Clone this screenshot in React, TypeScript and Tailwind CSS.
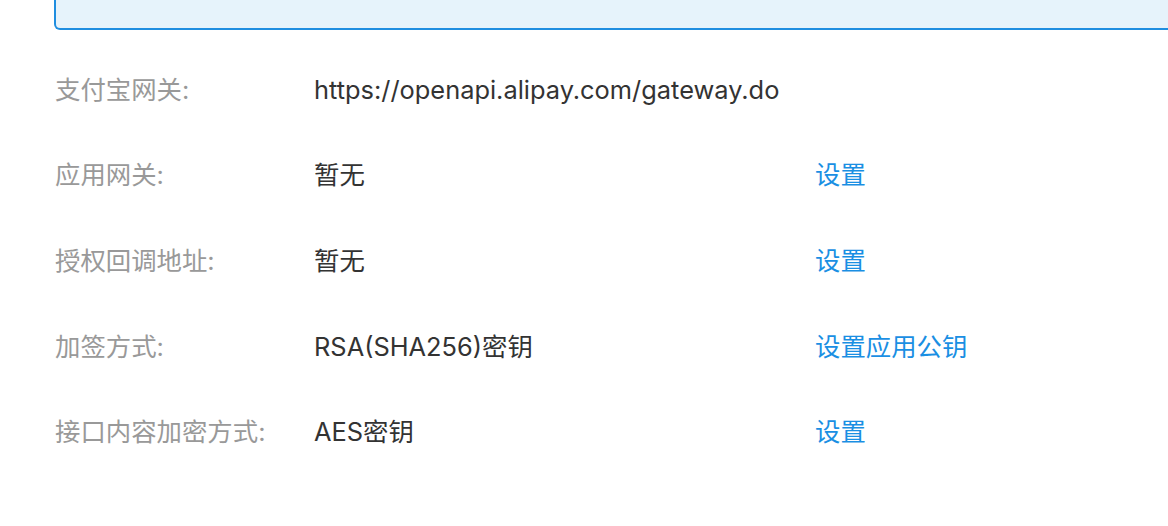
const rows: { label: string; value: string; action?: string }[] = [
  { label: "支付宝网关:", value: "https://openapi.alipay.com/gateway.do" },
  { label: "应用网关:", value: "暂无", action: "设置" },
  { label: "授权回调地址:", value: "暂无", action: "设置" },
  { label: "加签方式:", value: "RSA(SHA256)密钥", action: "设置应用公钥" },
  { label: "接口内容加密方式:", value: "AES密钥", action: "设置" },
];

export default function App() {
  return (
    <div
      className="h-[526px] w-[1168px] overflow-hidden bg-white pl-[54px]"
      style={{ fontFamily: 'Inter, "Noto Sans CJK SC", sans-serif' }}
    >
      {/* info box, only its lower edge is in view */}
      <div className="-mr-4 h-[30px] rounded-b-md border-x-2 border-b-2 border-[#1f8ee0] bg-[#e6f3fb]" />

      <div className="mt-[17px]">
        {rows.map((row) => (
          <div key={row.label} className="flex h-[85.6px] items-center text-[25.4px]">
            <div className="w-[260px] pl-px text-[#999999]">{row.label}</div>
            <div className="w-[501px] text-[#333333]">{row.value}</div>
            {row.action && (
              <a href="#" className="text-[#1a8fe3]">
                {row.action}
              </a>
            )}
          </div>
        ))}
      </div>
    </div>
  );
}
